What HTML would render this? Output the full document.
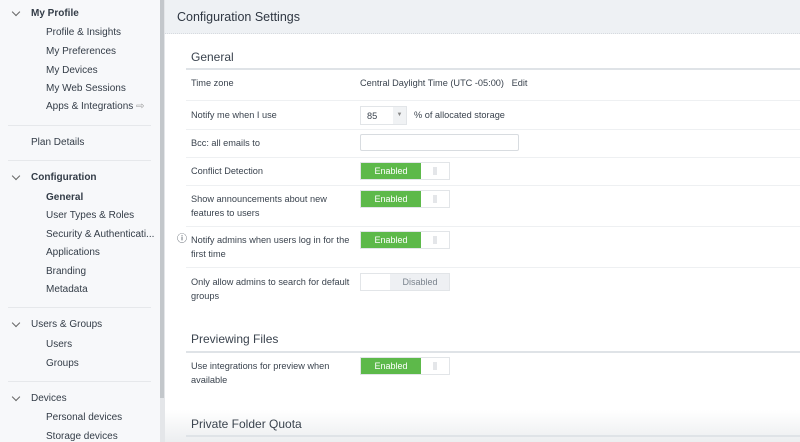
<!DOCTYPE html>
<html><head><meta charset="utf-8"><style>
*{margin:0;padding:0;box-sizing:border-box}
body{width:800px;height:442px;overflow:hidden;background:#fff;font-family:"Liberation Sans",sans-serif;color:#333c47;position:relative}
.side{position:absolute;left:0;top:0;width:160px;height:442px;background:#f7f8fa}
.sb{position:absolute;left:160px;top:0;width:5px;height:442px;background:#e4e6e9}
.sb i{position:absolute;left:0;top:0;width:4px;height:398px;background:#c3c7cb}
.t{position:absolute;font-size:10px;white-space:nowrap}
.h{font-weight:bold;left:31px}
.s{left:46px}
.chev{position:absolute;left:13px;width:6px;height:6px;border-right:1px solid #666;border-bottom:1px solid #666;transform:rotate(45deg)}
.dv{position:absolute;left:8px;width:143px;height:1px;background:#e6e8eb}
.main{position:absolute;left:165px;top:0;width:635px;height:442px;background:#fff}
.hdr{position:absolute;left:0;top:0;width:635px;height:34px;background:#eef1f4;border-bottom:1px dotted #d6dadf}
.hdr span{position:absolute;left:12px;top:10px;font-size:12.5px;color:#2f3742}
.m{position:absolute;font-size:9.2px;color:#3a434e;white-space:nowrap;line-height:14px}
.sec{position:absolute;left:26px;font-size:12px;color:#3a434e}
.ln{position:absolute;left:21px;width:614px;height:1px;background:#eef0f2}
.ln2{position:absolute;left:21px;width:614px;height:2px;background:#dfe3e7}
.tg{position:absolute;left:195px;width:90px;height:18px;border:1px solid #e2e5e8;background:#fff}
.tg b{position:absolute;left:0;top:0;width:60px;height:16px;background:#5db94a;color:#fff;font-weight:normal;font-size:9px;text-align:center;line-height:16px}
.tg i{position:absolute;left:72px;top:4px;width:4px;height:8px;background:#e4e6e9}
.dis{position:absolute;left:195px;width:90px;height:18px;border:1px solid #e2e5e8;background:#eef0f3}
.dis b{position:absolute;left:0;top:0;width:29px;height:16px;background:#fff}
.dis span{position:absolute;left:29px;width:60px;text-align:center;top:0;line-height:16px;font-size:9px;color:#7a838d}
</style></head><body>
<div class="side">
<div class="chev" style="top:9px"></div><div class="t h" style="top:8px">My Profile</div>
<div class="t s" style="top:27px">Profile &amp; Insights</div>
<div class="t s" style="top:46px">My Preferences</div>
<div class="t s" style="top:65px">My Devices</div>
<div class="t s" style="top:83px">My Web Sessions</div>
<div class="t s" style="top:101px">Apps &amp; Integrations <span style="color:#999">&#8680;</span></div>
<div class="dv" style="top:125px"></div>
<div class="t" style="left:31px;top:137px">Plan Details</div>
<div class="dv" style="top:160px"></div>
<div class="chev" style="top:173px"></div><div class="t h" style="top:172px">Configuration</div>
<div class="t s" style="top:192px;font-weight:bold">General</div>
<div class="t s" style="top:210px">User Types &amp; Roles</div>
<div class="t s" style="top:229px">Security &amp; Authenticati...</div>
<div class="t s" style="top:247px">Applications</div>
<div class="t s" style="top:266px">Branding</div>
<div class="t s" style="top:284px">Metadata</div>
<div class="dv" style="top:307px"></div>
<div class="chev" style="top:320px"></div><div class="t" style="left:31px;top:319px">Users &amp; Groups</div>
<div class="t s" style="top:339px">Users</div>
<div class="t s" style="top:358px">Groups</div>
<div class="dv" style="top:381px"></div>
<div class="chev" style="top:394px"></div><div class="t" style="left:31px;top:393px">Devices</div>
<div class="t s" style="top:412px">Personal devices</div>
<div class="t s" style="top:431px">Storage devices</div>
</div>
<div class="sb"><i></i></div>
<div class="main">
<div class="hdr"><span>Configuration Settings</span></div>
<div class="sec" style="top:50px">General</div>
<div class="ln2" style="top:68px"></div>
<div class="m" style="left:26px;top:76px">Time zone</div>
<div class="m" style="left:195px;top:76px">Central Daylight Time (UTC -05:00) &nbsp; Edit</div>
<div class="ln" style="top:100px"></div>
<div class="m" style="left:26px;top:108px">Notify me when I use</div>
<div style="position:absolute;left:195px;top:106px;width:47px;height:19px;border:1px solid #e2e5e8"><span class="m" style="left:6px;top:2px">85</span><span style="position:absolute;left:32px;top:0;width:13px;height:17px;background:#f0f2f4;font-size:6px;color:#888;text-align:center;line-height:17px">&#9660;</span></div>
<div class="m" style="left:249px;top:108px">% of allocated storage</div>
<div class="ln" style="top:129px"></div>
<div class="m" style="left:26px;top:136px">Bcc: all emails to</div>
<div style="position:absolute;left:195px;top:134px;width:159px;height:17px;border:1px solid #d8dce0;border-radius:2px"></div>
<div class="ln" style="top:157px"></div>
<div class="m" style="left:26px;top:164px">Conflict Detection</div>
<div class="tg" style="top:162px"><b>Enabled</b><i></i></div>
<div class="ln" style="top:185px"></div>
<div class="m" style="left:26px;top:192px">Show announcements about new<br>features to users</div>
<div class="tg" style="top:190px"><b>Enabled</b><i></i></div>
<div class="ln" style="top:226px"></div>
<div class="m" style="left:12px;top:233px;font-size:10px">&#9432;</div>
<div class="m" style="left:26px;top:233px">Notify admins when users log in for the<br>first time</div>
<div class="tg" style="top:231px"><b>Enabled</b><i></i></div>
<div class="ln" style="top:267px"></div>
<div class="m" style="left:26px;top:275px">Only allow admins to search for default<br>groups</div>
<div class="dis" style="top:273px"><b></b><span>Disabled</span></div>
<div class="sec" style="top:332px">Previewing Files</div>
<div class="ln2" style="top:351px"></div>
<div class="m" style="left:26px;top:359px">Use integrations for preview when<br>available</div>
<div class="tg" style="top:357px"><b>Enabled</b><i></i></div>
<div style="position:absolute;left:0;top:410px;width:635px;height:32px;background:linear-gradient(#fff,#eceef0)"></div>
<div class="sec" style="top:417px">Private Folder Quota</div>
<div class="ln2" style="top:435px"></div>
</div>
</body></html>
